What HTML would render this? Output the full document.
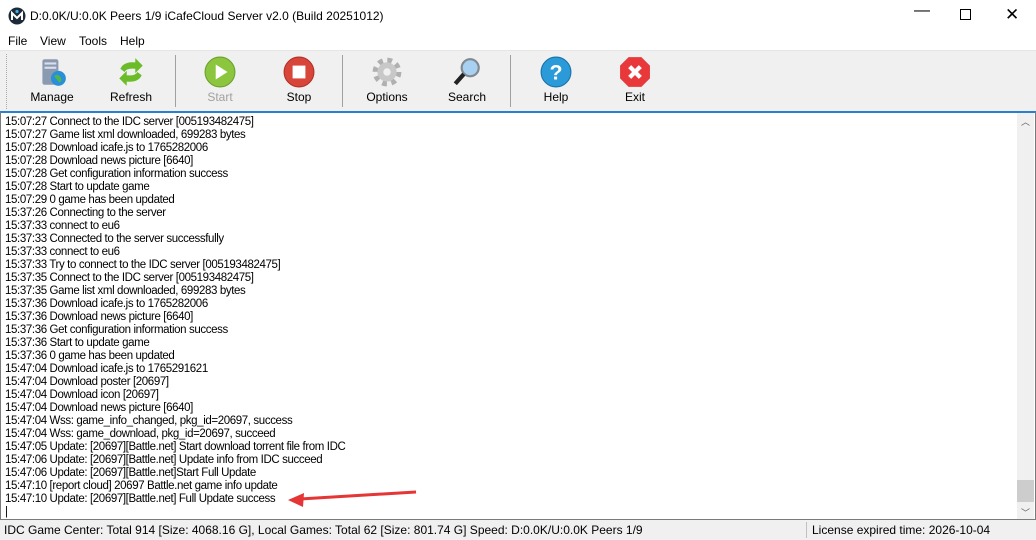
<!DOCTYPE html>
<html><head><style>
*{margin:0;padding:0;box-sizing:border-box}
body{width:1036px;height:540px;overflow:hidden;background:#f0f0f0;font-family:"Liberation Sans",sans-serif;position:relative}
.title{position:absolute;left:0;top:0;width:1036px;height:32px;background:#fff;font-size:12px}
.title span{position:absolute;left:30px;top:9px}
.wc{position:absolute;top:8px;font-size:14px;color:#000}
.menu{position:absolute;top:32px;left:0;width:1036px;height:18px;background:#fff;font-size:12px}
.menu span{position:absolute;top:2px}
.tb{position:absolute;top:50px;left:0;width:1036px;height:61px;background:#f0f0f0;border-top:1px solid #e6e6e6}
.btn{position:absolute;top:0;width:70px;text-align:center;font-size:12px}
.btn .ic{position:absolute;left:19px;top:5px;width:32px;height:32px}
.btn .lb{position:absolute;top:39px;left:0;width:70px}
.sep{position:absolute;top:4px;width:1px;height:52px;background:#a0a0a0}
.log{position:absolute;left:0;top:111px;width:1036px;height:409px;background:#fff;border-top:2px solid #2a80d0;border-left:1px solid #7a7a7a;border-right:1px solid #7a7a7a;border-bottom:1px solid #7a7a7a}
.txt{position:absolute;left:4px;top:3px;font-size:11.5px;line-height:13px;letter-spacing:-0.38px;color:#000;white-space:pre}
.sb{position:absolute;right:1px;top:0;width:17px;height:406px;background:#f0f0f0}
.status{position:absolute;left:0;top:520px;width:1036px;height:20px;font-size:12px;background:#f0f0f0}
</style></head><body>
<div class="title">
<svg style="position:absolute;left:8px;top:7px" width="18" height="18"><circle cx="9" cy="9" r="8.5" fill="#1d2a38"/><path d="M4 13V6l5 5 5-5v7" stroke="#fff" stroke-width="2" fill="none"/><circle cx="9" cy="4.5" r="1.6" fill="#3ab0e0"/></svg>
<span>D:0.0K/U:0.0K Peers 1/9 iCafeCloud Server v2.0 (Build 20251012)</span>
<div class="wc" style="left:914px;top:2px;font-size:16px">—</div>
<div style="position:absolute;left:960px;top:9px;width:11px;height:11px;border:1px solid #000"></div>
<div class="wc" style="left:1005px;top:5px;font-size:17px">✕</div>
</div>
<div class="menu"><span style="left:8px">File</span><span style="left:40px">View</span><span style="left:79px">Tools</span><span style="left:120px">Help</span></div>
<div class="tb">
<div style="position:absolute;left:6px;top:3px;width:1px;height:55px;border-left:1px dotted #aaa"></div>
<div class="btn" style="left:17px"><svg class="ic" viewBox="0 0 30 30"><rect x="6" y="3" width="15" height="24" rx="2" fill="#8a9ab0"/><rect x="8" y="6" width="11" height="2" fill="#dde"/><rect x="8" y="10" width="11" height="2" fill="#dde"/><circle cx="21" cy="21" r="7" fill="#2a8fd8"/><path d="M17 19q3-3 6 1 2 3-1 5" fill="#4cb84c"/></svg><div class="lb">Manage</div></div>
<div class="btn" style="left:96px"><svg class="ic" viewBox="0 0 30 30"><path d="M5 12q3-7 14-6V2l7 7-7 7v-4q-8-1-10 3z" fill="#6cbc2a"/><path d="M25 18q-3 7-14 6v4l-7-7 7-7v4q8 1 10-3z" fill="#6cbc2a"/></svg><div class="lb">Refresh</div></div>
<div class="sep" style="left:175px"></div>
<div class="btn" style="left:185px"><svg class="ic" viewBox="0 0 30 30"><circle cx="15" cy="15" r="14" fill="#8cc63e" stroke="#6aa02a"/><path d="M11 8l11 7-11 7z" fill="#fff"/></svg><div class="lb" style="color:#a0a0a0">Start</div></div>
<div class="btn" style="left:264px"><svg class="ic" viewBox="0 0 30 30"><circle cx="15" cy="15" r="14" fill="#d8463a" stroke="#b03028"/><rect x="9" y="9" width="12" height="12" fill="#fff"/></svg><div class="lb">Stop</div></div>
<div class="sep" style="left:342px"></div>
<div class="btn" style="left:352px"><svg class="ic" viewBox="0 0 30 30"><circle cx="15" cy="15" r="10" fill="none" stroke="#b0b0b0" stroke-width="7" stroke-dasharray="4 3.85"/><circle cx="15" cy="15" r="9" fill="#c8c8c8"/><circle cx="15" cy="15" r="3.5" fill="#f0f0f0"/></svg><div class="lb">Options</div></div>
<div class="btn" style="left:432px"><svg class="ic" viewBox="0 0 30 30"><circle cx="18" cy="11" r="8" fill="#a8d0f0" stroke="#808890" stroke-width="2"/><path d="M12 17L4 26" stroke="#222" stroke-width="4"/></svg><div class="lb">Search</div></div>
<div class="sep" style="left:510px"></div>
<div class="btn" style="left:521px"><svg class="ic" viewBox="0 0 30 30"><circle cx="15" cy="15" r="14" fill="#2a9ad8" stroke="#1a70a8"/><text x="15" y="22" font-size="20" font-weight="bold" fill="#fff" text-anchor="middle" font-family="Liberation Sans">?</text></svg><div class="lb">Help</div></div>
<div class="btn" style="left:600px"><svg class="ic" viewBox="0 0 30 30"><path d="M9 1h12l8 8v12l-8 8H9l-8-8V9z" fill="#e8383a"/><path d="M10 10l10 10M20 10L10 20" stroke="#fff" stroke-width="4"/></svg><div class="lb">Exit</div></div>
</div>
<div class="log">
<div class="txt">15:07:27 Connect to the IDC server [005193482475]
15:07:27 Game list xml downloaded, 699283 bytes
15:07:28 Download icafe.js to 1765282006
15:07:28 Download news picture [6640]
15:07:28 Get configuration information success
15:07:28 Start to update game
15:07:29 0 game has been updated
15:37:26 Connecting to the server
15:37:33 connect to eu6
15:37:33 Connected to the server successfully
15:37:33 connect to eu6
15:37:33 Try to connect to the IDC server [005193482475]
15:37:35 Connect to the IDC server [005193482475]
15:37:35 Game list xml downloaded, 699283 bytes
15:37:36 Download icafe.js to 1765282006
15:37:36 Download news picture [6640]
15:37:36 Get configuration information success
15:37:36 Start to update game
15:37:36 0 game has been updated
15:47:04 Download icafe.js to 1765291621
15:47:04 Download poster [20697]
15:47:04 Download icon [20697]
15:47:04 Download news picture [6640]
15:47:04 Wss: game_info_changed, pkg_id=20697, success
15:47:04 Wss: game_download, pkg_id=20697, succeed
15:47:05 Update: [20697][Battle.net] Start download torrent file from IDC
15:47:06 Update: [20697][Battle.net] Update info from IDC succeed
15:47:06 Update: [20697][Battle.net]Start Full Update
15:47:10 [report cloud] 20697 Battle.net game info update
15:47:10 Update: [20697][Battle.net] Full Update success
|</div>
<svg style="position:absolute;left:285px;top:376px" width="135" height="20"><path d="M130 3L14 10" stroke="#e53535" stroke-width="3"/><path d="M2 11l16-7-1 14z" fill="#e53535"/></svg>
<div class="sb"><div style="position:absolute;left:0;top:367px;width:17px;height:22px;background:#cdcdcd"></div><div style="position:absolute;top:2px;left:4px;font-size:9px;color:#606060">︿</div><div style="position:absolute;top:393px;left:4px;font-size:9px;color:#606060">﹀</div></div>
</div>
<div class="status"><span style="position:absolute;left:4px;top:3px">IDC Game Center: Total 914 [Size: 4068.16 G], Local Games: Total 62 [Size: 801.74 G] Speed: D:0.0K/U:0.0K Peers 1/9</span>
<div style="position:absolute;left:806px;top:2px;width:1px;height:16px;background:#c0c0c0"></div>
<span style="position:absolute;left:812px;top:3px">License expired time: 2026-10-04</span></div>
</body></html>
